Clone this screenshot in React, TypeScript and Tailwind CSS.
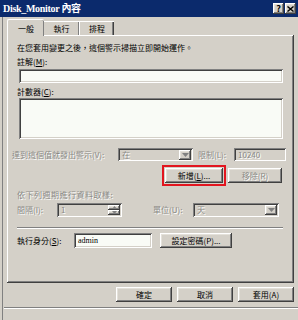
import React from 'react';

const raised =
    'bg-[#d4d0c8] shadow-[inset_-1px_-1px_#404040,inset_1px_1px_#ffffff,inset_-2px_-2px_#808080,inset_2px_2px_#e4e1da]';
const sunken =
    'shadow-[inset_1px_1px_#808080,inset_-1px_-1px_#ffffff,inset_2px_2px_#404040,inset_-2px_-2px_#d4d0c8]';
const disabledText = 'text-[#8a8a85] [text-shadow:1px_1px_0_#ffffff]';

function DropArrow({ disabled }: { disabled?: boolean }) {
    return (
        <div className={`w-[12px] h-[10px] flex items-center justify-center ${raised}`}>
            <svg width="7" height="4" viewBox="0 0 7 4">
                <path d="M0 0h7L3.5 4z" fill={disabled ? '#808080' : '#000'} />
            </svg>
        </div>
    );
}

function SpinHalf({ up }: { up?: boolean }) {
    return (
        <div className={`w-[12px] h-[5px] flex items-center justify-center ${raised}`}>
            <svg width="5" height="3" viewBox="0 0 5 3">
                <path d={up ? 'M0 3h5L2.5 0z' : 'M0 0h5L2.5 3z'} fill="#808080" />
            </svg>
        </div>
    );
}

function Btn({ label, w, disabled }: { label: string; w: string; disabled?: boolean }) {
    return (
        <div
            className={`${w} h-[15px] flex items-center justify-center ${raised} ${
                disabled ? disabledText : 'text-black'
            }`}
        >
            {label}
        </div>
    );
}

export default function App() {
    return (
        <div
            className="w-[298px] h-[320px] bg-[#d4d0c8] overflow-hidden text-[8px] leading-[12px] text-black flex flex-col"
            style={{ fontFamily: '"Noto Sans CJK TC", "Liberation Sans", sans-serif' }}
        >
            {/* Title bar */}
            <div className="h-[17px] bg-[#0b2a6c] flex items-center pl-[3px] pr-[2px]">
                <span
                    className="text-white font-bold text-[10px] flex-1 tracking-[-0.3px]"
                    style={{ fontFamily: '"Liberation Serif", "Noto Sans CJK TC", serif' }}
                >
                    Disk_Monitor 內容
                </span>
                <div className={`w-[11px] h-[11px] flex items-center justify-center font-bold text-[9px] leading-none ${raised}`}>?</div>
                <div className={`w-[11px] h-[11px] ml-px flex items-center justify-center ${raised}`}>
                    <svg width="7" height="6" viewBox="0 0 7 6">
                        <path d="M0.5 0.5L6.5 5.5M6.5 0.5L0.5 5.5" stroke="#000" strokeWidth="1.4" />
                    </svg>
                </div>
            </div>

            <div className="flex-1 flex flex-col border-l border-[#808080] ml-[2px]">
                {/* Tabs */}
                <div className="flex items-end pl-[4px] mt-[1px] h-[17px]">
                    <div className="w-[37px] h-[17px] pt-[3px] text-center bg-[#d4d0c8] border-t border-l border-white shadow-[inset_-1px_0_#808080] rounded-t-[2px] relative z-10 -mb-px">
                        一般
                    </div>
                    <div className="w-[35px] h-[14px] pt-[1px] text-center border-t border-white shadow-[inset_-1px_0_#808080]">
                        執行
                    </div>
                    <div className="w-[35px] h-[14px] pt-[1px] text-center border-t border-l border-white shadow-[inset_-1px_0_#404040,inset_-2px_0_#808080]">
                        排程
                    </div>
                </div>

                {/* Panel */}
                <div className={`ml-[4px] w-[287px] h-[248px] ${raised} shadow-[inset_-1px_-1px_#404040,inset_1px_1px_#ffffff,inset_-2px_-2px_#808080] pl-[10px] pt-[7px] flex flex-col`}>
                    <div>在您套用變更之後，這個警示掃描立即開始運作。</div>
                    <div className="mt-[2px]">註解(<u>M</u>):</div>
                    <div className={`mt-[1px] ml-[2px] w-[264px] h-[14px] bg-[#f9fbf6] ${sunken}`} />
                    <div className="mt-[3px]">計數器(<u>C</u>):</div>
                    <div className={`ml-[2px] w-[264px] h-[41px] bg-[#f9fbf6] ${sunken}`} />

                    <div className="mt-[9px] flex items-center h-[13px]">
                        <span className={`-ml-[5px] w-[106px] ${disabledText}`}>達到這個值就發出警示(V):</span>
                        <div className={`w-[75px] h-[13px] flex items-center justify-between pl-[4px] pr-[2px] ${sunken} ${disabledText}`}>
                            在
                            <DropArrow disabled />
                        </div>
                        <span className={`ml-[5px] w-[36px] ${disabledText}`}>限制(L):</span>
                        <div className={`w-[52px] h-[13px] flex items-center pl-[4px] ${sunken} ${disabledText}`}>10240</div>
                    </div>

                    <div className="mt-[4px] flex items-center ml-[145px]">
                        <div className="border-2 border-[#e2151f] p-px">
                            <div className={`w-[58px] h-[15px] flex items-center justify-center ${raised} shadow-[inset_-1px_-1px_#000,inset_1px_1px_#ffffff,inset_-2px_-2px_#808080]`}>
                                新增(<u>L</u>)...
                            </div>
                        </div>
                        <div className="ml-[2px]">
                            <Btn label="移除(R)" w="w-[54px]" disabled />
                        </div>
                    </div>

                    <div className={`mt-[3px] tracking-[0.5px] ${disabledText}`}>依下列週期進行資料取樣:</div>
                    <div className="mt-[2px] flex items-center h-[14px]">
                        <span className={`w-[40px] ${disabledText}`}>間隔(I):</span>
                        <div className={`w-[65px] h-[14px] flex items-center justify-between pl-[4px] pr-[2px] ${sunken} ${disabledText}`}>
                            1
                            <div className="flex flex-col">
                                <SpinHalf up />
                                <SpinHalf />
                            </div>
                        </div>
                        <span className={`ml-[31px] w-[40px] ${disabledText}`}>單位(U):</span>
                        <div className={`w-[86px] h-[14px] flex items-center justify-between pl-[4px] pr-[2px] ${sunken} ${disabledText}`}>
                            天
                            <DropArrow disabled />
                        </div>
                    </div>

                    <div className="mt-[10px] w-[266px] h-[2px] border-t border-[#808080] border-b border-b-white" />

                    <div className="mt-[4px] flex items-center h-[15px]">
                        <span className="w-[57px]">執行身分(<u>S</u>):</span>
                        <div
                            className={`w-[78px] h-[15px] flex items-center pl-[4px] bg-[#f9fbf6] ${sunken}`}
                            style={{ fontFamily: '"Liberation Serif", serif' }}
                        >
                            admin
                        </div>
                        <div className="ml-[8px]">
                            <Btn label="設定密碼(P)..." w="w-[72px]" />
                        </div>
                    </div>
                </div>

                {/* Dialog buttons */}
                <div className="mt-[4px] flex gap-[5px] ml-[113px]">
                    <Btn label="確定" w="w-[56px]" />
                    <Btn label="取消" w="w-[56px]" />
                    <Btn label="套用(A)" w="w-[56px]" />
                </div>

                {/* Bottom strip */}
                <div className="mt-[5px] flex-1 ml-px border-t border-[#808080] shadow-[inset_0_1px_#ffffff]" />
            </div>
        </div>
    );
}
